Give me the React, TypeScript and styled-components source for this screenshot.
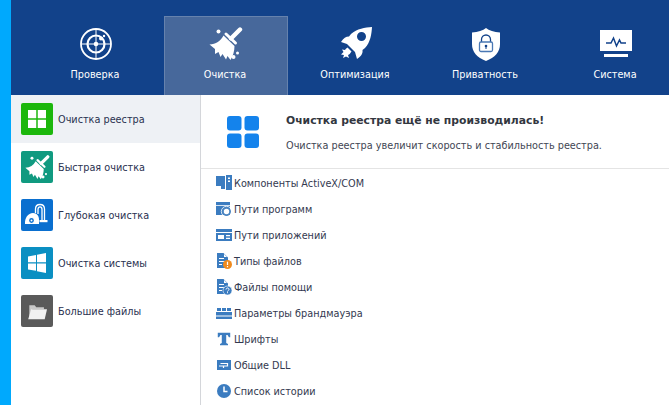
import React, { FC } from 'react'
import styled, { createGlobalStyle } from 'styled-components'

const FONT = `'DejaVu Sans', Verdana, sans-serif`
const NAVY = '#12428a'
const LIST_BLUE = '#3b7cc0'

const GlobalStyle = createGlobalStyle`
  html, body {
    margin: 0;
    height: 100%;
    overflow: hidden;
    background: #fff;
  }
  #root {
    height: 100%;
  }
`

const Page = styled.div`
  display: flex;
  width: 669px;
  height: 405px;
  overflow: hidden;
  font-family: ${FONT};
`

const Strip = styled.div`
  flex: 0 0 11px;
  background: #00a9fd;
`

const Main = styled.div`
  flex: 1;
  min-width: 0;
  display: flex;
  flex-direction: column;
`

const Header = styled.header`
  flex: 0 0 95px;
  box-sizing: border-box;
  display: flex;
  gap: 6px;
  padding: 16px 0 0 23px;
  background: ${NAVY};
  overflow: hidden;
`

const Tab = styled.div<{ $active?: boolean }>`
  flex: 0 0 124px;
  box-sizing: border-box;
  display: flex;
  flex-direction: column;
  align-items: center;
  padding-top: 10px;
  color: #fff;
  font-size: 9.7px;
  background: ${p => (p.$active ? '#47689b' : 'transparent')};
  border: 1px solid ${p => (p.$active ? '#6682ad' : 'transparent')};
  border-bottom: 0;
`

const TabIcon = styled.div`
  height: 34px;
  display: flex;
  align-items: center;
  justify-content: center;
`

const TabLabel = styled.span`
  margin-top: 6px;
  padding-right: 2px;
  line-height: 16px;
`

const Body = styled.div`
  flex: 1;
  min-height: 0;
  display: flex;
`

const Sidebar = styled.nav`
  flex: 0 0 190px;
  box-sizing: border-box;
  border-right: 1px solid #d4d6da;
`

const SideRow = styled.div<{ $active?: boolean }>`
  height: 48px;
  display: flex;
  align-items: center;
  gap: 5px;
  padding-left: 10px;
  font-size: 9.7px;
  color: #2a3150;
  background: ${p => (p.$active ? '#eef1f5' : 'transparent')};
`

const SideIcon = styled.div<{ $color: string }>`
  flex: 0 0 32px;
  height: 32px;
  display: flex;
  align-items: center;
  justify-content: center;
  border-radius: 2px;
  background: ${p => p.$color};
`

const Content = styled.section`
  flex: 1;
  min-width: 0;
`

const Summary = styled.div`
  height: 74px;
  box-sizing: border-box;
  display: flex;
  align-items: center;
  gap: 27px;
  padding-left: 26px;
  border-bottom: 1px solid #e4e4e4;
`

const SummaryText = styled.div`
  display: flex;
  flex-direction: column;
  gap: 9px;
  margin-top: 3px;
`

const Title = styled.h1`
  margin: 0;
  font-size: 10.8px;
  line-height: 16px;
  font-weight: 700;
  color: #33373f;
`

const Subtitle = styled.p`
  margin: 0;
  font-size: 9.7px;
  line-height: 16px;
  color: #3f4654;
`

const List = styled.ul`
  margin: 0;
  padding: 1px 0 0 15px;
  list-style: none;
`

const ListRow = styled.li`
  height: 26px;
  display: flex;
  align-items: center;
  gap: 1px;
  font-size: 9.7px;
  color: #33394f;
`

const ListIcon = styled.div`
  flex: 0 0 17px;
  height: 17px;
  display: flex;
  align-items: center;
`

const BroomIcon: FC<{ size: number }> = ({ size }) => (
  <svg width={size} height={size} viewBox="0 0 34 34" fill="#fff">
    <path d="M31 2.500L22 11.500" stroke="#fff" strokeWidth="4.400" strokeLinecap="round" />
    <path d="M17 7L26.500 16" stroke="#fff" strokeWidth="3" strokeLinecap="round" />
    <path d="M14.500 8.500L25.500 19C25.500 24 24 29 21.500 33L18.500 29 17 32.500 13.500 27 11.500 30 9.500 25 6 27 6 22 .5 17.500C7 17 11.500 14 14.500 8.500Z" />
    <circle cx="9.500" cy="4.500" r="2" />
    <circle cx="24.500" cy="30" r="2" />
    <circle cx="28.500" cy="26" r="1.500" />
  </svg>
)

const RadarIcon: FC = () => (
  <svg width="34" height="34" viewBox="0 0 34 34" fill="none" stroke="#fff">
    <circle cx="17" cy="17" r="15" strokeWidth="1.800" />
    <circle cx="17" cy="17" r="8.500" strokeWidth="2.200" />
    <path d="M17 2v30M2 17h30" strokeWidth="1" />
    <circle cx="17" cy="17" r="2.300" fill="#fff" stroke="none" />
    <circle cx="22" cy="11.500" r="2" fill="#fff" stroke="none" />
    <circle cx="25" cy="9" r="1.200" fill="#fff" stroke="none" />
  </svg>
)

const RocketIcon: FC = () => (
  <svg width="34" height="34" viewBox="0 0 34 34" fill="#fff">
    <path
      fillRule="evenodd"
      d="M33 0C26 .5 18 1.500 12 7L10 9.500C7 9.500 4.500 11 2 15L8 17 16 25 18 32C22 29 24 27 23.500 23L26 21C31.500 15 32.500 7 33 0ZM22.500 5a4.500 4.500 0 100 9 4.500 4.500 0 000-9Z"
    />
    <path d="M8.500 20.500L12.500 24.500C11.500 26 10.500 27.500 9 28L10 31 7 29.500 4 31 5 28 2 27.500 4.500 25 3 22.500 6 23C7 21.500 7.500 21 8.500 20.500Z" />
  </svg>
)

const ShieldIcon: FC = () => (
  <svg width="28" height="33" viewBox="0 0 28 33">
    <path
      fill="#fff"
      d="M14 0c3 2.500 8 4 14 4.500V16c0 8-5 13.500-14 17C5 29.500 0 24 0 16V4.500C6 4 11 2.500 14 0z"
    />
    <path d="M9.500 14v-2.500a4.500 4.500 0 019 0V14" fill="none" stroke={NAVY} strokeWidth="1.300" />
    <rect x="7.500" y="14" width="13" height="9.500" rx="1.500" fill="none" stroke="#4a78b4" strokeWidth="1.300" />
    <circle cx="14" cy="18" r="1.300" fill={NAVY} />
    <path d="M14 18v3" stroke={NAVY} strokeWidth="1" />
  </svg>
)

const MonitorIcon: FC = () => (
  <svg width="32" height="28" viewBox="0 0 32 28">
    <rect width="32" height="21" fill="#fff" />
    <rect x="4" y="24" width="24" height="3" fill="#fff" />
    <path d="M6 13h5l2.500-5 3 8 3-6 1.500 3h5" fill="none" stroke={NAVY} strokeWidth="1.500" />
  </svg>
)

const TilesIcon: FC<{ size: number; color: string; radius?: number; gap: number }> = ({
  size,
  color,
  radius = 0,
  gap,
}) => {
  const cell = (size - gap) / 2
  const far = cell + gap
  return (
    <svg width={size} height={size} viewBox={`0 0 ${size} ${size}`} fill={color}>
      <rect width={cell} height={cell} rx={radius} />
      <rect x={far} width={cell} height={cell} rx={radius} />
      <rect y={far} width={cell} height={cell} rx={radius} />
      <rect x={far} y={far} width={cell} height={cell} rx={radius} />
    </svg>
  )
}

const VacuumIcon: FC = () => (
  <svg width="32" height="32" viewBox="0 0 32 32" fill="none" stroke="#fff">
    <path d="M14.500 14V10C14.500 4 23.500 4 23.500 10V21" strokeWidth="1.300" />
    <path d="M17 15V10.500C17 7 21 7 21 10.500V21" strokeWidth="1.300" />
    <path d="M4 25C3.500 19 7 14 12 14C16 14 18 17 18 21V25Z" fill="#fff" stroke="none" />
    <circle cx="10.500" cy="21.500" r="3" fill="#0a6fcf" strokeWidth="1.200" />
    <circle cx="10.500" cy="21.500" r="1" fill="#fff" stroke="none" />
    <rect x="18.500" y="21" width="8" height="2.200" fill="#fff" stroke="none" />
  </svg>
)

const WindowsIcon: FC = () => (
  <svg width="18" height="20" viewBox="0 0 18 20" fill="#fff">
    <path d="M0 3.500L8 2v7.300H0zM9 1.800L18 0v9.300H9zM0 10.500h8v7.300L0 16.500zM9 10.500h9V20l-9-1.800z" />
  </svg>
)

const FolderIcon: FC = () => (
  <svg width="20" height="17" viewBox="0 0 26 22">
    <path d="M3 18V3h7l2 2.500h10V8H7z" fill="#c9c9c9" />
    <path d="M5.500 8H26l-3 13H1.500z" fill="#f1f1f1" />
  </svg>
)

const ActiveXIcon = (
  <svg width="16" height="16" viewBox="0 0 16 16" fill={LIST_BLUE}>
    <path d="M0 1h9v10H0zM5 11h4v3H5z" />
    <path fillRule="evenodd" d="M10 0h6v15h-6zM12 2.500V4h2V2.500zm0 3V7h2V5.500z" />
  </svg>
)

const ProgramPathIcon = (
  <svg width="16" height="16" viewBox="0 0 16 16">
    <rect y="1" width="14" height="13" fill={LIST_BLUE} />
    <rect y="4" width="14" height="1" fill="#d5e3f2" />
    <circle cx="10.500" cy="10.500" r="3.600" fill="#fff" stroke="#4c86c2" strokeWidth="1.800" />
    <circle cx="10.500" cy="10.500" r="5.200" fill="none" stroke="#fff" strokeWidth=".8" />
  </svg>
)

const AppPathIcon = (
  <svg width="16" height="16" viewBox="0 0 16 16" fill={LIST_BLUE}>
    <rect y="2" width="16" height="3" />
    <path fillRule="evenodd" d="M0 6h16v8H0zM2 8v4h6V8zM10 8v1.300h4V8zM10 10.700V12h4v-1.300z" />
  </svg>
)

const docPath = 'M1 0h6.500L12 4.500V15H1zM3 5v1h5V5zm0 3v1h6V8zm0 3v1h3v-1zM8 1v3h3z'

const FileTypeIcon = (
  <svg width="16" height="16" viewBox="0 0 16 16">
    <path fill={LIST_BLUE} fillRule="evenodd" d={docPath} />
    <circle cx="11.500" cy="11.500" r="4.500" fill="#f08a1d" />
    <path d="M11.500 8.800v3.200M11.500 13v1.200" stroke="#fff" strokeWidth="1.200" />
  </svg>
)

const HelpFileIcon = (
  <svg width="16" height="16" viewBox="0 0 16 16">
    <path fill={LIST_BLUE} fillRule="evenodd" d={docPath} />
    <circle cx="11.500" cy="11.500" r="4.500" fill={LIST_BLUE} stroke="#fff" strokeWidth=".6" />
    <path d="M10 10.500c0-2 3-2 3 0 0 1-1.500 1-1.500 2M11.500 13.200v1" fill="none" stroke="#fff" strokeWidth="1" />
  </svg>
)

const FirewallIcon = (
  <svg width="16" height="16" viewBox="0 0 16 16" fill={LIST_BLUE}>
    <path d="M1 3h4v3H1zM6 3h4v3H6zM11 3h4v3h-4zM0 7h16v3.500H0zM0 11.500h16V14H0z" />
  </svg>
)

const FontIcon = (
  <svg width="16" height="16" viewBox="-1 -1 18 18" fill={LIST_BLUE}>
    <path d="M1 1h14v5h-1.500L12 3.500H10.500v9l2 1V15h-9v-1.500l2-1v-9H4L2.500 6H1z" />
  </svg>
)

const DllIcon = (
  <svg width="16" height="16" viewBox="0 0 16 16">
    <rect x="1" y="3" width="14" height="10" fill={LIST_BLUE} />
    <path d="M4.500 6.500h7V9H7.500v2M3 9h4" fill="none" stroke="#fff" strokeWidth="1.200" />
  </svg>
)

const HistoryIcon = (
  <svg width="16" height="16" viewBox="0 0 16 16">
    <circle cx="8" cy="8" r="7" fill={LIST_BLUE} />
    <path d="M8 3.500V8.500h3.500" fill="none" stroke="#fff" strokeWidth="1.500" />
  </svg>
)

const tabs = [
  { label: 'Проверка', icon: <RadarIcon /> },
  { label: 'Очистка', icon: <BroomIcon size={34} />, active: true },
  { label: 'Оптимизация', icon: <RocketIcon /> },
  { label: 'Приватность', icon: <ShieldIcon /> },
  { label: 'Система', icon: <MonitorIcon /> },
]

const sideItems = [
  { label: 'Очистка реестра', color: '#1cb70c', icon: <TilesIcon size={18} gap={1.5} color="#fff" />, active: true },
  { label: 'Быстрая очистка', color: '#109a80', icon: <BroomIcon size={25} /> },
  { label: 'Глубокая очистка', color: '#0a6fcf', icon: <VacuumIcon /> },
  { label: 'Очистка системы', color: '#0a8fc2', icon: <WindowsIcon /> },
  { label: 'Большие файлы', color: '#5a5a5a', icon: <FolderIcon /> },
]

const listItems = [
  { label: 'Компоненты ActiveX/COM', icon: ActiveXIcon },
  { label: 'Пути программ', icon: ProgramPathIcon },
  { label: 'Пути приложений', icon: AppPathIcon },
  { label: 'Типы файлов', icon: FileTypeIcon },
  { label: 'Файлы помощи', icon: HelpFileIcon },
  { label: 'Параметры брандмауэра', icon: FirewallIcon },
  { label: 'Шрифты', icon: FontIcon },
  { label: 'Общие DLL', icon: DllIcon },
  { label: 'Список истории', icon: HistoryIcon },
]

const App: FC = () => (
  <>
    <GlobalStyle />
    <Page>
      <Strip />
      <Main>
        <Header>
          {tabs.map(tab => (
            <Tab key={tab.label} $active={tab.active}>
              <TabIcon>{tab.icon}</TabIcon>
              <TabLabel>{tab.label}</TabLabel>
            </Tab>
          ))}
        </Header>
        <Body>
          <Sidebar>
            {sideItems.map(item => (
              <SideRow key={item.label} $active={item.active}>
                <SideIcon $color={item.color}>{item.icon}</SideIcon>
                {item.label}
              </SideRow>
            ))}
          </Sidebar>
          <Content>
            <Summary>
              <TilesIcon size={32} gap={3} color="#1483ec" radius={3} />
              <SummaryText>
                <Title>Очистка реестра ещё не производилась!</Title>
                <Subtitle>Очистка реестра увеличит скорость и стабильность реестра.</Subtitle>
              </SummaryText>
            </Summary>
            <List>
              {listItems.map(item => (
                <ListRow key={item.label}>
                  <ListIcon>{item.icon}</ListIcon>
                  {item.label}
                </ListRow>
              ))}
            </List>
          </Content>
        </Body>
      </Main>
    </Page>
  </>
)

export default App
